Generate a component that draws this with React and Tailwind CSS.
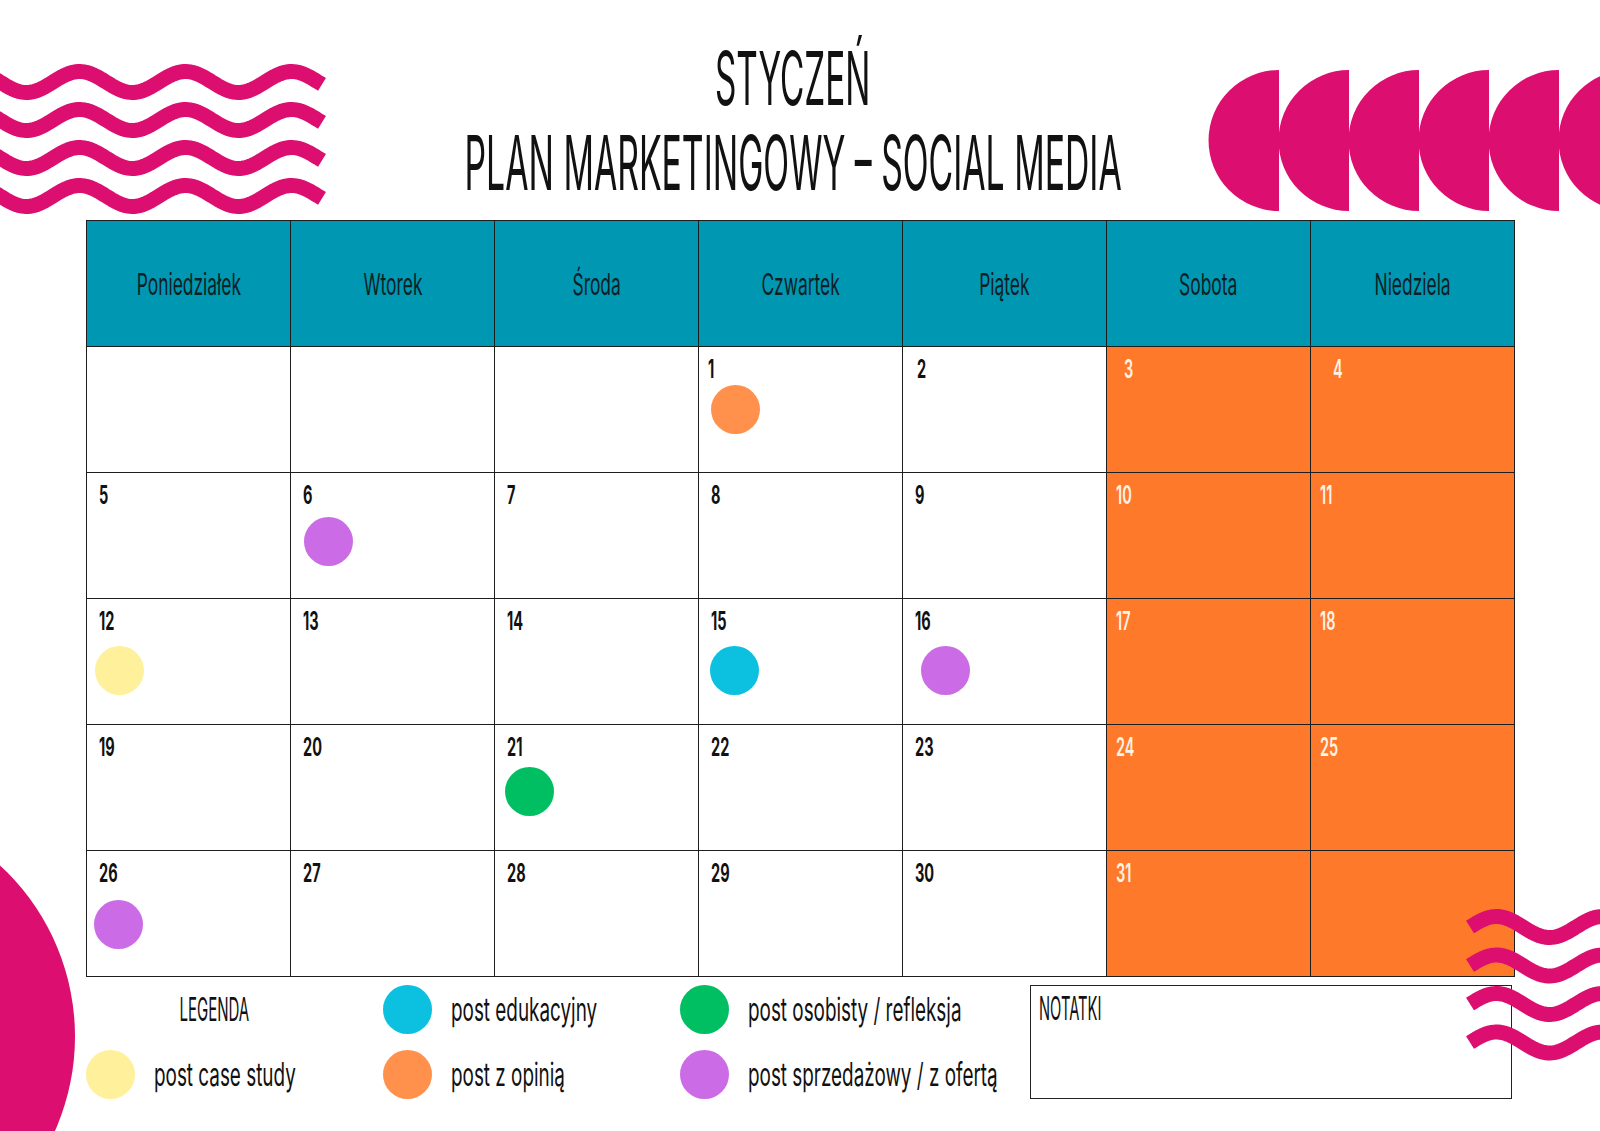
const MAGENTA = '#dc0e6f';

const DAYS = ['Poniedziałek', 'Wtorek', 'Środa', 'Czwartek', 'Piątek', 'Sobota', 'Niedziela'];

const WEEKS = [
    [null, null, null, 1, 2, 3, 4],
    [5, 6, 7, 8, 9, 10, 11],
    [12, 13, 14, 15, 16, 17, 18],
    [19, 20, 21, 22, 23, 24, 25],
    [26, 27, 28, 29, 30, 31, null],
];

// kropki w kalendarzu (kolor + przesunięcie w komórce)
const DOTS = {
    1: 'bg-[#ff914d] ml-[12px] mt-[4px]',
    6: 'bg-[#cb6ce6] ml-[13px] mt-[10px]',
    12: 'bg-[#fff09b] ml-[8px] mt-[13px]',
    15: 'bg-[#0cc0df] ml-[11px] mt-[13px]',
    16: 'bg-[#cb6ce6] ml-[18px] mt-[13px]',
    21: 'bg-[#00bf63] ml-[10px] mt-[8px]',
    26: 'bg-[#cb6ce6] ml-[7px] mt-[15px]',
};

const PADS = { 1: 'pl-[9px]', 2: 'pl-[14px]', 3: 'pl-[17px]', 4: 'pl-[22px]' };

const Narrow = ({ className = '', children }) => (
    <span className={`inline-block whitespace-nowrap ${className}`}>{children}</span>
);

const wavePath = (x0, x1, mid, dir) => {
    const pts = [];
    for (let x = x0; x <= x1 + 0.01; x += 2) {
        pts.push(`${x.toFixed(1)} ${(mid + dir * 10.5 * Math.sin((2 * Math.PI * (x - x0)) / 106)).toFixed(2)}`);
    }
    return 'M' + pts.join(' L');
};

const TopWaves = () => (
    <svg className="absolute left-0 top-0" width="340" height="230" viewBox="0 0 340 230">
        {[82, 120, 158, 196].map((m) => (
            <path key={m} d={wavePath(-106, 322, m, 1)} fill="none" stroke={MAGENTA} strokeWidth="15" strokeLinecap="butt" strokeLinejoin="round" />
        ))}
    </svg>
);

const BottomWaves = () => (
    <svg className="absolute left-[1440px] top-[890px]" width="160" height="180" viewBox="1440 890 160 180">
        {[927, 965.5, 1004, 1042.5].map((m) => (
            <path key={m} d={wavePath(1470, 1612, m, -1)} fill="none" stroke={MAGENTA} strokeWidth="15" strokeLinecap="butt" strokeLinejoin="round" />
        ))}
    </svg>
);

const HalfMoons = () => (
    <svg className="absolute left-[1200px] top-[60px]" width="400" height="162" viewBox="0 0 400 162">
        {[0, 1, 2, 3, 4, 5].map((k) => {
            const cx = 79 + 70 * k;
            return <path key={k} d={`M${cx} 10 A70.5 70.5 0 0 0 ${cx} 151 Z`} fill={MAGENTA} />;
        })}
    </svg>
);

const DayCell = ({ n, weekend }) => (
    <div className={`h-[126px] border-r border-b border-[#1e1e1e] pt-[10px] flex flex-col items-start ${weekend ? 'bg-[#fe7a2a]' : 'bg-white'}`}>
        {n && (
            <div className={`h-[24px] text-[25px] leading-[24px] ${PADS[n] || (weekend ? 'pl-[9px]' : 'pl-[12px]')} ${weekend ? 'text-[#fff3e6] font-semibold' : 'text-[#111] font-bold'}`}>
                <Narrow className="origin-left scale-x-[0.58]">{n}</Narrow>
            </div>
        )}
        {n && DOTS[n] && <div className={`w-[49px] h-[49px] rounded-full ${DOTS[n]}`} />}
    </div>
);

const LegendItem = ({ color, label }) => (
    <div className="h-[49px] flex items-center gap-[19px]">
        <div className={`w-[49px] h-[49px] rounded-full shrink-0 ${color}`} />
        <div className="text-[32px] leading-[32px] text-[#111]">
            <Narrow className="origin-left scale-x-[0.59]">{label}</Narrow>
        </div>
    </div>
);

export default function App() {
    return (
        <div className="relative w-[1600px] h-[1131px] overflow-hidden bg-white font-['Inter','Liberation_Sans',sans-serif] text-[#111]">
            <TopWaves />
            <HalfMoons />
            <div className="absolute left-[-390px] top-[804px] w-[465px] h-[465px] rounded-full bg-[#dc0e6f]" />

            <main className="relative flex flex-col">
                <header className="pt-[41px] pr-[14px] flex flex-col items-center gap-[11px] font-normal">
                    <h1 className="h-[74px] text-[74px] leading-[74px]">
                        <Narrow className="scale-x-[0.45]">STYCZEŃ</Narrow>
                    </h1>
                    <h2 className="h-[74px] text-[75px] leading-[74px]">
                        <Narrow className="scale-x-[0.45]">PLAN MARKETINGOWY – SOCIAL MEDIA</Narrow>
                    </h2>
                </header>

                <div className="ml-[86px] mt-[20px] w-[1429px] grid grid-cols-[repeat(7,204px)] border-l border-t border-[#1e1e1e]">
                    {DAYS.map((d) => (
                        <div key={d} className="h-[126px] border-r border-b border-[#1e1e1e] bg-[#0097b2] flex items-center justify-center text-[30px] leading-[30px] text-[#0c1f27]">
                            <Narrow className="scale-x-[0.58]">{d}</Narrow>
                        </div>
                    ))}
                    {WEEKS.map((week, w) =>
                        week.map((n, i) => <DayCell key={`${w}-${i}`} n={n} weekend={i >= 5} />)
                    )}
                </div>

                <div className="flex ml-[86px] mt-[8px]">
                    <div className="w-[297px] shrink-0 flex flex-col gap-[16px]">
                        <div className="w-[256px] h-[49px] flex items-center justify-center text-[32px] leading-[32px]">
                            <Narrow className="scale-x-[0.47]">LEGENDA</Narrow>
                        </div>
                        <LegendItem color="bg-[#fff09b]" label="post case study" />
                    </div>
                    <div className="w-[297px] shrink-0 flex flex-col gap-[16px]">
                        <LegendItem color="bg-[#0cc0df]" label="post edukacyjny" />
                        <LegendItem color="bg-[#ff914d]" label="post z opinią" />
                    </div>
                    <div className="w-[297px] shrink-0 flex flex-col gap-[16px]">
                        <LegendItem color="bg-[#00bf63]" label="post osobisty / refleksja" />
                        <LegendItem color="bg-[#cb6ce6]" label="post sprzedażowy / z ofertą" />
                    </div>
                    <div className="ml-[53px] w-[482px] h-[114px] shrink-0 border border-[#222] pl-[8px] pt-[7px] text-[32px] leading-[32px]">
                        <Narrow className="origin-left scale-x-[0.46]">NOTATKI</Narrow>
                    </div>
                </div>
            </main>

            <BottomWaves />
        </div>
    );
}
